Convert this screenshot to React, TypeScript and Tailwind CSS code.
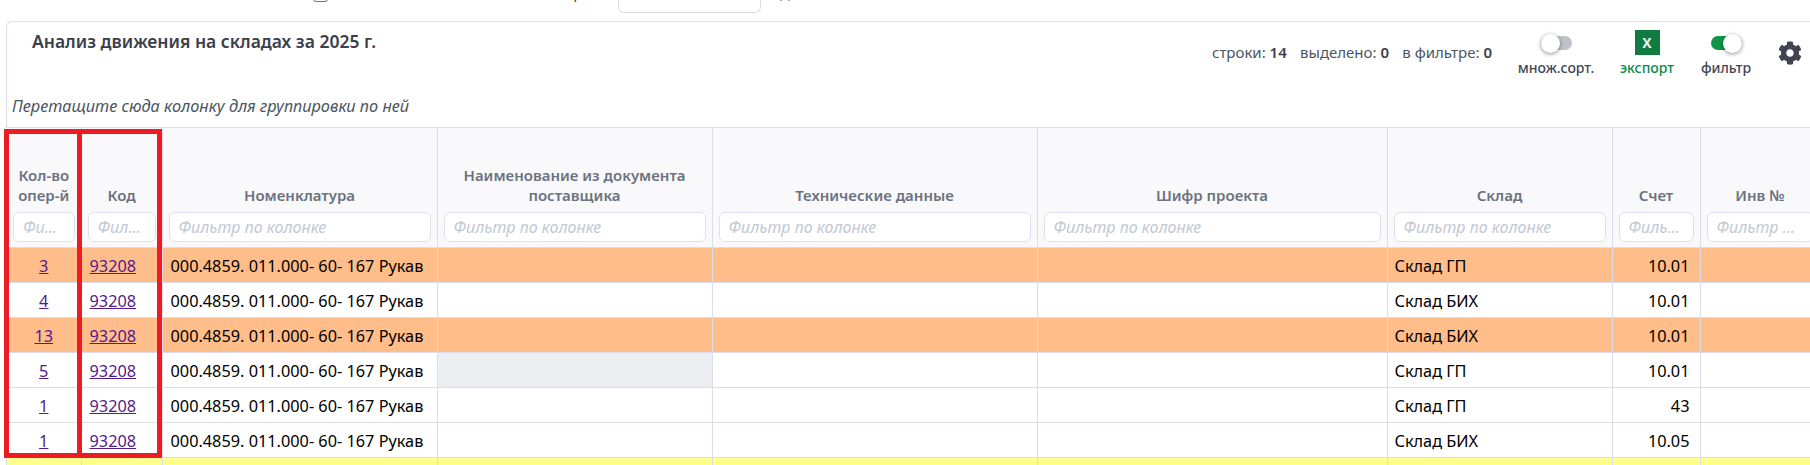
import React from 'react';
import { X } from 'lucide-react';
import { FaCog } from 'react-icons/fa';

const columns = [
  { title: 'Кол-во опер-й', width: 'w-[74px]' },
  { title: 'Код', width: 'w-[81px]' },
  { title: 'Номенклатура', width: 'w-[275px]' },
  { title: 'Наименование из документа поставщика', width: 'w-[275px]' },
  { title: 'Технические данные', width: 'w-[325px]' },
  { title: 'Шифр проекта', width: 'w-[350px]' },
  { title: 'Склад', width: 'w-[225px]' },
  { title: 'Счет', width: 'w-[88px]' },
  { title: 'Инв №', width: 'w-[120px]' },
];

const rows = [
  { count: 3, store: 'Склад ГП', account: '10.01', bg: 'bg-[#ffbd8a]' },
  { count: 4, store: 'Склад БИХ', account: '10.01', bg: 'bg-white' },
  { count: 13, store: 'Склад БИХ', account: '10.01', bg: 'bg-[#ffbd8a]' },
  { count: 5, store: 'Склад ГП', account: '10.01', bg: 'bg-white', grayCell: true },
  { count: 1, store: 'Склад ГП', account: '43', bg: 'bg-white' },
  { count: 1, store: 'Склад БИХ', account: '10.05', bg: 'bg-white' },
  { count: 2, store: 'Склад БИХ', account: '10.01', bg: 'bg-[#ffff8c]' },
];

const Toggle = ({ on }: { on: boolean }) => (
  <div className={`flex h-[14px] w-[31px] items-center rounded-full ${on ? 'justify-end bg-[#0f9548]' : 'justify-start bg-[#bfc2c9]'}`}>
    <div className="h-[19px] w-[19px] rounded-full bg-white shadow-[0_1px_4px_rgba(0,0,0,0.45)]" />
  </div>
);

const App: React.FC = () => {
  return (
    <div className="relative h-[465px] w-[1810px] overflow-hidden bg-white font-['Noto_Sans',sans-serif] text-[14px]">
      {/* Top filter bar, scrolled almost out of view */}
      <div className="flex h-[13px] items-end overflow-hidden text-[#374151]">
        <span className="mb-[10px] ml-[166px] w-[142px] shrink-0 whitespace-nowrap">дата начала и дата</span>
        <span className="mb-[11px] ml-[5px] h-[15px] w-[15px] shrink-0 rounded-[3px] border border-[#6b7280]" />
        <span className="mb-[10px] w-[254px] shrink-0 whitespace-nowrap text-right">показать все колонки и номер</span>
        <div className="ml-[36px] h-[13px] w-[143px] shrink-0 rounded-b-[6px] border border-t-0 border-[#dcdcea] bg-white" />
        <X className="mb-[9px] ml-[16px] h-[16px] w-[16px] shrink-0 text-[#555]" strokeWidth={2.5} />
      </div>

      {/* Report panel */}
      <div className="ml-[6px] mt-[8px] w-[1900px] rounded-tl-[6px] border-l border-t border-[#dcdcea]">
        <div className="flex h-[105px] w-[1795px] flex-col">
          <div className="flex h-[70px] items-start">
            <h2 className="ml-[25px] mt-[7px] text-[17.5px] font-semibold leading-[24px] text-[#3a3f4b]">
              Анализ движения на складах за 2025 г.
            </h2>
            <div className="ml-auto mt-[20px] flex w-[280px] justify-between text-[15px] leading-[20px] text-[#4b5563]">
              <span>строки: <b className="font-semibold text-[#3a3f4b]">14</b></span>
              <span>выделено: <b className="font-semibold text-[#3a3f4b]">0</b></span>
              <span>в фильтре: <b className="font-semibold text-[#3a3f4b]">0</b></span>
            </div>
            <div className="ml-[25px] mt-[11px] flex w-[78px] flex-col items-center">
              <div className="flex h-[20px] items-center"><Toggle on={false} /></div>
              <span className="mt-[6px] whitespace-nowrap text-[14px] font-medium leading-[18px] text-[#3f4654]">множ.сорт.</span>
            </div>
            <div className="ml-[24px] mt-[8px] flex w-[56px] flex-col items-center">
              <div className="flex h-[25px] w-[25px] items-center justify-center bg-[#107c41] text-[14px] font-bold text-[#e8f3ec]">X</div>
              <span className="mt-[4px] whitespace-nowrap text-[14px] font-medium leading-[18px] text-[#0a8a4a]">экспорт</span>
            </div>
            <div className="ml-[24px] mt-[11px] flex w-[54px] flex-col items-center">
              <div className="flex h-[20px] items-center"><Toggle on={true} /></div>
              <span className="mt-[6px] whitespace-nowrap text-[14px] font-medium leading-[18px] text-[#3f4654]">фильтр</span>
            </div>
            <FaCog className="ml-[25px] mt-[19px] h-[24px] w-[24px] text-[#3f4450]" />
          </div>
          <p className="ml-[5px] mt-[3px] text-[16.3px] italic leading-[22px] text-[#4b5563]">
            Перетащите сюда колонку для группировки по ней
          </p>
        </div>

        <table className="w-[1813px] table-fixed border-collapse">
          <thead>
            <tr className="h-[120px] bg-[#f9f9fb]">
              {columns.map((col) => (
                <th key={col.title} className={`${col.width} border border-l-0 border-[#dcdcea] px-[6px] pb-[5px] align-bottom font-semibold text-[#6b7280]`}>
                  <div className="mb-[7px] text-[15px] leading-[20px]">{col.title}</div>
                  <input
                    placeholder="Фильтр по колонке"
                    className="h-[30px] w-full rounded-[6px] border border-[#e0e0ec] bg-white px-[9px] text-[16px] font-normal italic text-ellipsis outline-none placeholder:text-[#c3c8d4]"
                  />
                </th>
              ))}
            </tr>
          </thead>
          <tbody>
            {rows.map((row, i) => (
              <tr key={i} className={`h-[35px] ${row.bg} text-[16.3px] text-black`}>
                <td className="border border-l-0 border-[#dcdcea] pt-[2px] text-center">
                  <a href="#" className="text-[#551a8b] underline">{row.count}</a>
                </td>
                <td className="border border-[#dcdcea] pl-[8px] pt-[2px]">
                  <a href="#" className="text-[#551a8b] underline">93208</a>
                </td>
                <td className="whitespace-nowrap border border-[#dcdcea] pl-[8px] pt-[2px]">000.4859. 011.000- 60- 167 Рукав</td>
                <td className={`border border-[#dcdcea] ${row.grayCell ? 'bg-[#edeef2]' : ''}`} />
                <td className="border border-[#dcdcea]" />
                <td className="border border-[#dcdcea]" />
                <td className="border border-[#dcdcea] pl-[7px] pt-[2px]">{row.store}</td>
                <td className="border border-[#dcdcea] pr-[10px] pt-[2px] text-right">{row.account}</td>
                <td className="border border-[#dcdcea]" />
              </tr>
            ))}
          </tbody>
        </table>
      </div>

      {/* Red highlight frames drawn over the first two columns */}
      <div className="absolute left-[4px] top-[129px] h-[329px] w-[78px] border-[5px] border-[#ed1c24]" />
      <div className="absolute left-[77px] top-[129px] h-[329px] w-[85px] border-[5px] border-[#ed1c24]" />
    </div>
  );
};

export default App;
